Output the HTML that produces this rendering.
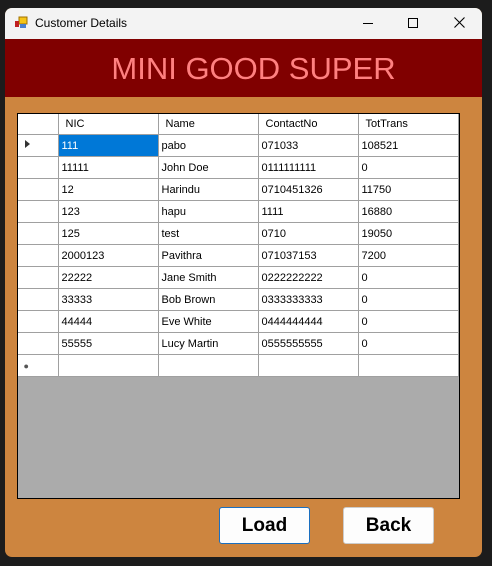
<!DOCTYPE html>
<html><head><style>
body{margin:0;width:492px;height:566px;background:#1c1c1c;position:relative;overflow:hidden;font-family:"Liberation Sans",sans-serif}
.win{position:absolute;left:5px;top:8px;width:477px;height:549px;background:#cd853f;border-radius:7px;overflow:hidden}
.tb{position:absolute;left:0;top:0;width:477px;height:31px;background:#f3f3f3}
.tb .t{position:absolute;left:30px;top:8px;font-size:12px;color:#000}
.hd{position:absolute;left:0;top:31px;width:477px;height:58px;background:#800000}
.hd div{position:absolute;left:0;width:100%;top:12px;text-align:center;font-size:31px;color:#ff8080;padding-left:20px;box-sizing:border-box}
.grid{position:absolute;left:12px;top:105px;width:441px;height:384px;border:1px solid #000;background:#ababab}
table{border-collapse:collapse;font-size:11px;table-layout:fixed;position:absolute;left:0;top:0}
td{height:21px;border:1px solid #a0a0a0;background:#fff;padding:0 0 0 3px;white-space:nowrap;overflow:hidden}
tr:first-child td{border-top:none;height:20px;padding-left:7px}
td:first-child{border-left:none}
.sel{background:#0078d7;color:#fff}
.btn{position:absolute;top:499px;width:89px;height:35px;background:#fdfdfd;border:1px solid #ccc;border-radius:3px;font-size:19px;font-weight:bold;text-align:center;line-height:35px}
</style></head><body>
<div class="win">
<div class="tb">
<svg style="position:absolute;left:9px;top:8px" width="14" height="14"><rect x="5" y="1" width="8" height="7" fill="#f5c518" stroke="#a07000"/><rect x="1" y="5" width="4" height="6" fill="#c02020"/><rect x="6" y="8" width="6" height="4" fill="#4a7fd0"/></svg>
<div class="t">Customer Details</div>
<div style="position:absolute;left:358px;top:15px;width:10px;height:1px;background:#000"></div>
<div style="position:absolute;left:403px;top:10px;width:8px;height:8px;border:1px solid #000"></div>
<svg style="position:absolute;left:449px;top:9px" width="11" height="11"><path d="M0.5 0.5L10.5 10.5M10.5 0.5L0.5 10.5" stroke="#000" stroke-width="1.1"/></svg>
</div>
<div class="hd"><div>MINI GOOD SUPER</div></div>
<div class="grid">
<table>
<colgroup><col style="width:40px"><col style="width:100px"><col style="width:100px"><col style="width:100px"><col style="width:100px"></colgroup>
<tr><td></td><td>NIC</td><td>Name</td><td>ContactNo</td><td>TotTrans</td></tr>
<tr><td><svg width="8" height="10" style="margin-left:3px"><path d="M1 1L6 5L1 9Z" fill="#333"/></svg></td><td class="sel">111</td><td>pabo</td><td>071033</td><td>108521</td></tr>
<tr><td></td><td>11111</td><td>John Doe</td><td>0111111111</td><td>0</td></tr>
<tr><td></td><td>12</td><td>Harindu</td><td>0710451326</td><td>11750</td></tr>
<tr><td></td><td>123</td><td>hapu</td><td>1111</td><td>16880</td></tr>
<tr><td></td><td>125</td><td>test</td><td>0710</td><td>19050</td></tr>
<tr><td></td><td>2000123</td><td>Pavithra</td><td>071037153</td><td>7200</td></tr>
<tr><td></td><td>22222</td><td>Jane Smith</td><td>0222222222</td><td>0</td></tr>
<tr><td></td><td>33333</td><td>Bob Brown</td><td>0333333333</td><td>0</td></tr>
<tr><td></td><td>44444</td><td>Eve White</td><td>0444444444</td><td>0</td></tr>
<tr><td></td><td>55555</td><td>Lucy Martin</td><td>0555555555</td><td>0</td></tr>
<tr><td style="font-size:9px;color:#555">&nbsp;&#9679;</td><td></td><td></td><td></td><td></td></tr>
</table>
</div>
<div class="btn" style="left:214px;border-color:#1a6fc0">Load</div>
<div class="btn" style="left:338px">Back</div>
</div>
</body></html>
